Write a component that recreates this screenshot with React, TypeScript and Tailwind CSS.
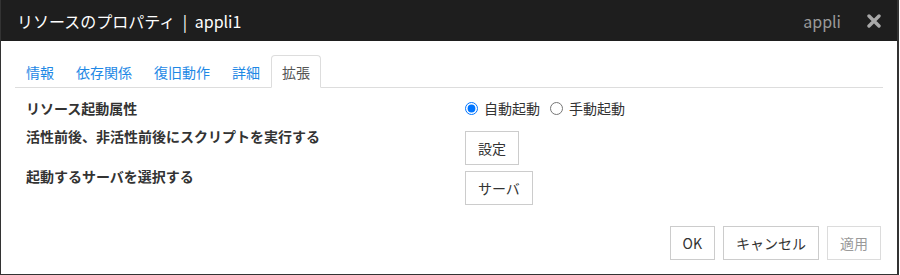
import { useState } from "react";

const FONT = { fontFamily: '"Noto Sans CJK JP", "Noto Sans", sans-serif' };

const TABS = ["情報", "依存関係", "復旧動作", "詳細", "拡張"];

function Btn({ children, disabled }: { children: React.ReactNode; disabled?: boolean }) {
  return (
    <button
      disabled={disabled}
      className={
        "h-[34px] px-3 border text-[14px] leading-[20px] bg-white " +
        (disabled ? "border-[#dcdcdc] text-[#9a9a9a]" : "border-[#cccccc] text-[#333333]")
      }
    >
      {children}
    </button>
  );
}

export default function App() {
  const [tab, setTab]   = useState(4);
  const [mode, setMode] = useState("auto");

  return (
    <div
      className="w-[899px] h-[275px] bg-white border-l border-r-2 border-b border-[#333333] flex flex-col"
      style={FONT}
    >
      {/* title bar */}
      <div className="h-[41px] shrink-0 bg-[#1e1e1e] flex items-center justify-between pl-[16px] pr-[16px]">
        <span className="text-[16px] text-white [word-spacing:4px]">リソースのプロパティ | appli1</span>
        <div className="flex items-center gap-[26px]">
          <span className="text-[16px] text-[#9a9a9a]">appli</span>
          <svg width="14" height="14" viewBox="0 0 14 14">
            <path d="M2 2 L12 12 M12 2 L2 12" stroke="#a8a8a8" strokeWidth="3.4" strokeLinecap="round" />
          </svg>
        </div>
      </div>

      <div className="flex-1 flex flex-col px-[14px]">
        {/* tabs */}
        <div className="mt-[14px] flex border-b border-[#dddddd]">
          {TABS.map((t, i) => (
            <button
              key={t}
              onClick={() => setTab(i)}
              className={
                "-mb-px h-[33px] px-[10px] flex items-center text-[14px] leading-[20px] rounded-t-[4px] border " +
                (i === tab
                  ? "border-[#dddddd] border-b-white bg-white text-[#555555]"
                  : "border-transparent text-[#1e88e5]")
              }
            >
              {t}
            </button>
          ))}
        </div>

        {/* properties */}
        <div className="pl-[11px] mt-[10px] text-[14px] leading-[20px] text-[#333333]">
          <div className="flex h-[28px]">
            <div className="w-[439px] shrink-0 font-bold">リソース起動属性</div>
            <div className="flex items-center h-[20px]">
              <label className="flex items-center">
                <input
                  type="radio"
                  name="mode"
                  checked={mode === "auto"}
                  onChange={() => setMode("auto")}
                  className="m-0 w-[13px] h-[13px]"
                />
                <span className="ml-[6px]">自動起動</span>
              </label>
              <label className="flex items-center ml-[10px]">
                <input
                  type="radio"
                  name="mode"
                  checked={mode === "manual"}
                  onChange={() => setMode("manual")}
                  className="m-0 w-[13px] h-[13px]"
                />
                <span className="ml-[6px]">手動起動</span>
              </label>
            </div>
          </div>

          <div className="flex">
            <div className="w-[439px] shrink-0 font-bold">活性前後、非活性前後にスクリプトを実行する</div>
            <div className="mt-[5px]">
              <Btn>設定</Btn>
            </div>
          </div>

          <div className="flex mt-[1px]">
            <div className="w-[439px] shrink-0 font-bold">起動するサーバを選択する</div>
            <div className="mt-[5px]">
              <Btn>サーバ</Btn>
            </div>
          </div>
        </div>

        {/* footer */}
        <div className="mt-[21px] flex justify-end gap-2 pr-[2px]">
          <Btn>OK</Btn>
          <Btn>キャンセル</Btn>
          <Btn disabled>適用</Btn>
        </div>
      </div>
    </div>
  );
}
